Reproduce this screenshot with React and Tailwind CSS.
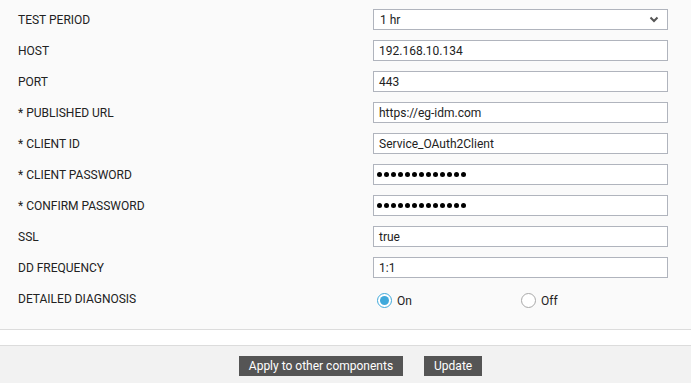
const rows = [
  { label: "TEST PERIOD", type: "select", value: "1 hr" },
  { label: "HOST", value: "192.168.10.134" },
  { label: "PORT", value: "443" },
  { label: "* PUBLISHED URL", value: "https://eg-idm.com" },
  { label: "* CLIENT ID", value: "Service_OAuth2Client" },
  { label: "* CLIENT PASSWORD", type: "password", value: 13 },
  { label: "* CONFIRM PASSWORD", type: "password", value: 13 },
  { label: "SSL", value: "true" },
  { label: "DD FREQUENCY", value: "1:1" },
];

function Field({ row }) {
  if (row.type === "select") {
    return (
      <div className="w-[295px] h-[21px] border border-[#b0b4bd] bg-white flex items-center justify-between pl-[6px] pr-[8px]">
        <span>{row.value}</span>
        <svg width="10" height="7" viewBox="0 0 10 7">
          <path d="M1.5 1.5 L5 5 L8.5 1.5" fill="none" stroke="#555" strokeWidth="2" />
        </svg>
      </div>
    );
  }
  if (row.type === "password") {
    return (
      <div className="w-[295px] h-[21px] border border-[#b0b4bd] bg-white flex items-center pl-[3px] gap-[2px]">
        {Array.from({ length: row.value }).map((_, i) => (
          <span key={i} className="w-[5px] h-[5px] rounded-full bg-black" />
        ))}
      </div>
    );
  }
  return (
    <div className="w-[295px] h-[21px] border border-[#b0b4bd] bg-white flex items-center pl-[5px]">
      <span>{row.value}</span>
    </div>
  );
}

function Radio({ checked, label }) {
  return (
    <div className="w-[144px] flex items-center gap-[5px]">
      {checked ? (
        <span className="w-[15px] h-[15px] rounded-full border border-[#3fa9db] bg-white flex items-center justify-center">
          <span className="w-[9px] h-[9px] rounded-full bg-[#3fa9db]" />
        </span>
      ) : (
        <span className="w-[15px] h-[15px] rounded-full border border-[#a8a8a8] bg-white" />
      )}
      <span>{label}</span>
    </div>
  );
}

export default function App() {
  return (
    <div className="w-[691px] h-[383px] bg-[#fafafa] text-[12px] text-[#222] flex flex-col" style={{ fontFamily: "Roboto, 'Liberation Sans', sans-serif" }}>
      <div className="pt-[4px] pb-[15px] pl-[18px]">
        {rows.map((row) => (
          <div key={row.label} className="h-[31px] flex items-center">
            <div className="w-[355px]">{row.label}</div>
            <Field row={row} />
          </div>
        ))}
        <div className="h-[31px] flex items-center">
          <div className="w-[359px]">DETAILED DIAGNOSIS</div>
          <div className="flex mt-[4px]">
            <Radio checked label="On" />
            <Radio label="Off" />
          </div>
        </div>
      </div>
      <div className="h-[17px] bg-white border-t border-b border-[#dcdcdc]" />
      <div className="flex-1 bg-[#f2f2f2] flex justify-center pl-[30px] pt-[10px] gap-[21px]">
        <button className="h-[20px] px-[10px] bg-[#555555] text-white text-[12px]">Apply to other components</button>
        <button className="h-[20px] px-[10px] bg-[#555555] text-white text-[12px]">Update</button>
      </div>
    </div>
  );
}
